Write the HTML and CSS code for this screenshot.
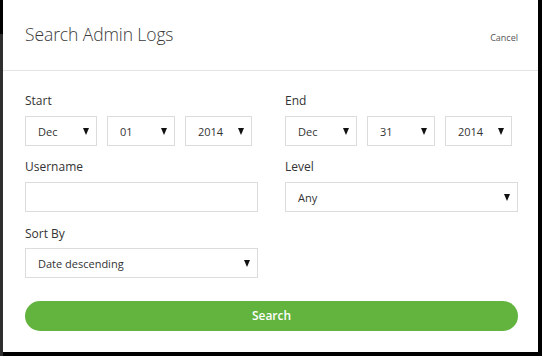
FILE: index.html
```html
<!DOCTYPE html>
<html lang="en">
<head>
<meta charset="utf-8">
<title>Search Admin Logs</title>
<link rel="stylesheet" href="styles.css">
</head>
<body>
<div class="modal">
  <header class="modal-header">
    <h1 class="title">Search Admin Logs</h1>
    <a class="cancel" href="#">Cancel</a>
  </header>
  <form class="modal-body">
    <div class="grid">
      <div class="field">
        <div class="label">Start</div>
        <div class="date-row">
          <div class="select w-month"><span>Dec</span><i class="arrow"></i></div>
          <div class="select w-day"><span>01</span><i class="arrow"></i></div>
          <div class="select w-year"><span>2014</span><i class="arrow"></i></div>
        </div>
      </div>
      <div class="field">
        <div class="label">End</div>
        <div class="date-row">
          <div class="select w-month"><span>Dec</span><i class="arrow"></i></div>
          <div class="select w-day"><span>31</span><i class="arrow"></i></div>
          <div class="select w-year"><span>2014</span><i class="arrow"></i></div>
        </div>
      </div>
      <div class="field">
        <div class="label">Username</div>
        <div class="input"></div>
      </div>
      <div class="field">
        <div class="label">Level</div>
        <div class="select"><span>Any</span><i class="arrow"></i></div>
      </div>
      <div class="field field-sort">
        <div class="label">Sort By</div>
        <div class="select"><span>Date descending</span><i class="arrow"></i></div>
      </div>
    </div>
    <button class="search-btn" type="button">Search</button>
  </form>
</div>
</body>
</html>
```
FILE: styles.css
```css
* { box-sizing: border-box; }
html, body { margin: 0; padding: 0; }
body {
  width: 542px;
  height: 356px;
  overflow: hidden;
  font-family: "Open Sans", "Noto Sans", sans-serif;
  color: #333;
  background:
    linear-gradient(#000 34px, transparent 34px),
    linear-gradient(to right, #2e2e2e 3px, #000 3px);
}
.modal {
  margin-left: 3px;
  width: 535px;
  height: 352px;
  background: #fff;
}
.modal-header {
  height: 71px;
  border-bottom: 1px solid #e4e4e4;
  display: flex;
  align-items: center;
  justify-content: space-between;
  padding: 0 20px 0 22px;
}
.title {
  margin: 0;
  font-size: 17.5px;
  font-weight: 300;
  color: #3a3a3a;
  letter-spacing: -0.1px;
  padding-bottom: 3px;
}
.cancel {
  font-size: 9px;
  color: #555;
  text-decoration: none;
  padding-top: 4px;
}
.modal-body {
  margin: 0;
  padding: 22px 20px 0 22px;
}
.grid {
  display: grid;
  grid-template-columns: 1fr 1fr;
  column-gap: 27px;
  row-gap: 13px;
}
.field-sort .label { margin-top: 1px; margin-bottom: 6px; }
.label {
  font-size: 12px;
  line-height: 16px;
  height: 16px;
  margin-bottom: 7px;
  color: #333;
}
.date-row {
  display: flex;
  gap: 10px;
}
.select, .input {
  height: 30px;
  border: 1px solid #dcdcdc;
  background: #fff;
  display: flex;
  align-items: center;
  justify-content: space-between;
  padding: 0 7px 0 12px;
  font-size: 11px;
  color: #333;
}
.w-month { width: 72px; flex: none; }
.w-day { width: 68px; flex: none; }
.w-year { width: 67px; flex: none; }
.arrow {
  width: 0;
  height: 0;
  border-left: 3.5px solid transparent;
  border-right: 3.5px solid transparent;
  border-top: 7px solid #111;
}
.search-btn {
  display: block;
  width: 100%;
  height: 30px;
  margin-top: 23px;
  border: 0;
  border-radius: 15px;
  background: #63b33f;
  color: #fff;
  font-family: inherit;
  font-size: 12px;
  font-weight: 600;
  padding: 0 0 1px;
}
```
